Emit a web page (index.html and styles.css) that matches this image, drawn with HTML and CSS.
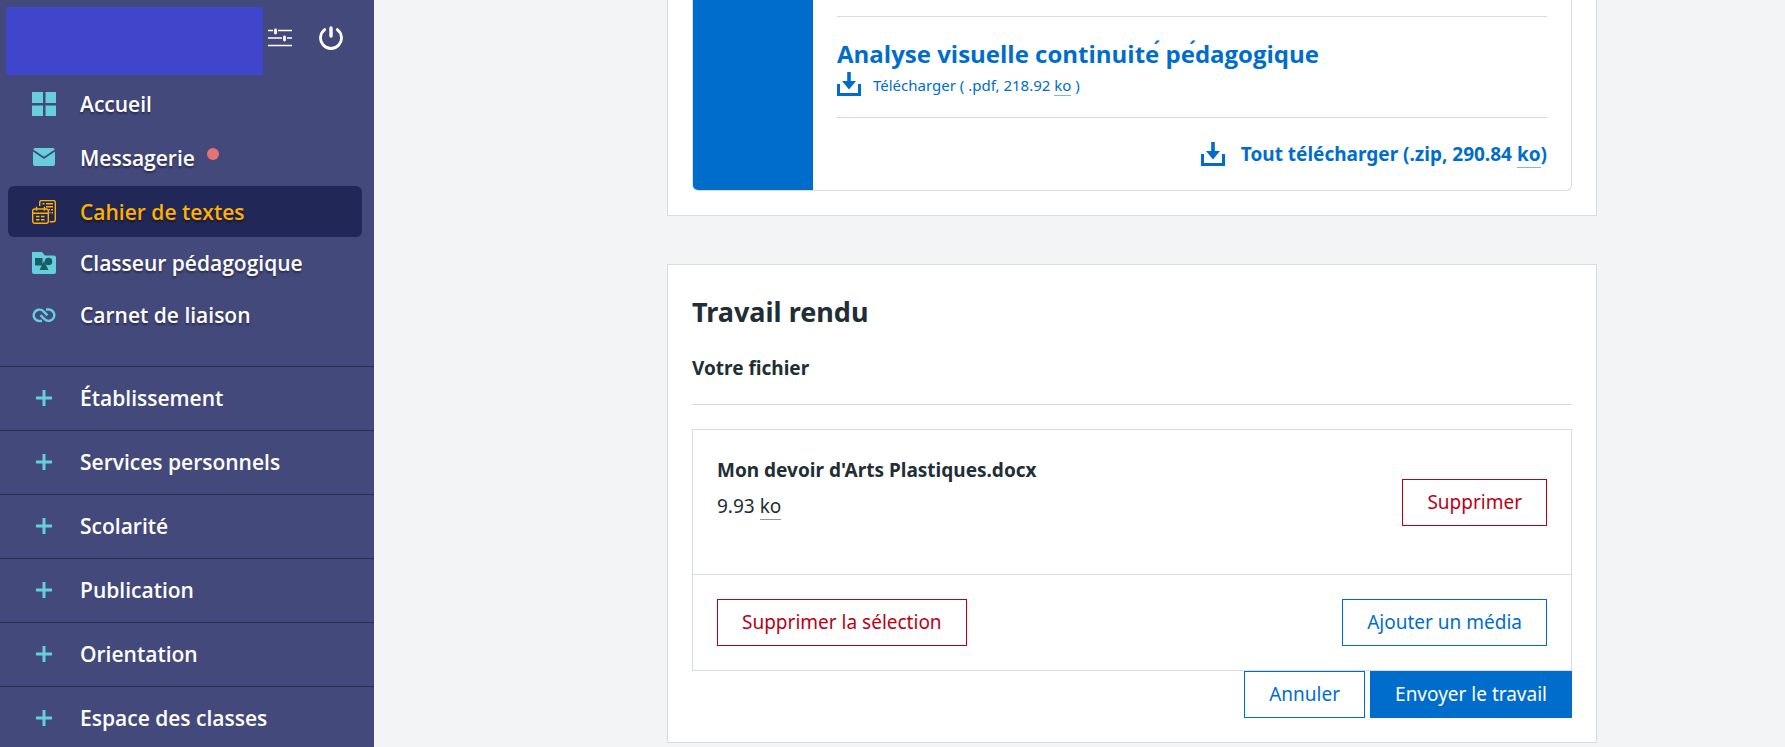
FILE: index.html
```html
<!DOCTYPE html>
<html lang="fr">
<head>
    <meta charset="UTF-8">
    <meta name="viewport" content="width=device-width, initial-scale=1.0">
    <title>Cahier de textes</title>
    <link rel="stylesheet" href="styles.css">
</head>
<body>
    <aside class="sidebar">
        <div class="sidebar-header">
            <div class="user"></div>
            <div class="header-actions">
                <button class="icon-button" type="button" aria-label="Préférences">
                    <svg class="icon" viewBox="0 0 24 24" fill="none" stroke="currentColor">
                        <path stroke-width="1.3" d="M0 4.500h5M10 4.500h14M0 12h14M19 12H24M0 19.500h24"/>
                        <path stroke-width="2.8" stroke-linecap="round" d="M7.5 4v3M16.5 11v3"/>
                    </svg>
                </button>
                <button class="icon-button" type="button" aria-label="Déconnexion">
                    <svg class="icon" viewBox="0 0 24 24" fill="none" stroke="currentColor" stroke-linecap="round">
                        <path stroke-width="2.8" d="M5.7 3.6a10.5 10.5 0 1 0 12.6 0"/>
                        <path stroke-width="3.4" d="M12 2v8"/>
                    </svg>
                </button>
            </div>
        </div>

        <nav>
            <ul class="menu">
                <li>
                    <a class="menu-link" href="#">
                        <svg class="icon" viewBox="0 0 24 24" fill="currentColor">
                            <path d="M0 0h11v11H0zM13.5 0H24v11H13.5zM0 13.5h11V24H0zM13.5 13.5H24V24H13.5z"/>
                        </svg>
                        <span>Accueil</span>
                    </a>
                </li>
                <li>
                    <a class="menu-link menu-link-mail" href="#">
                        <svg class="icon" viewBox="0 0 24 24" fill="currentColor">
                            <path d="M3 2h18a2 2 0 0 1 1.800 1.500L12 10.800 1.200 3.500A2 2 0 0 1 3 2z"/>
                            <path d="M1 5.600l11 7.400 11-7.400V18a2 2 0 0 1-2 2H3a2 2 0 0 1-2-2z"/>
                        </svg>
                        <span>Messagerie</span>
                        <span class="dot"></span>
                    </a>
                </li>
                <li>
                    <a class="menu-link active" href="#">
                        <svg class="icon" viewBox="0 0 24 24" fill="none" stroke="currentColor" stroke-width="1.4">
                            <path d="M7.700 6V2.500a2 2 0 0 1 2-2h11.600a2 2 0 0 1 2 2v17.200a2 2 0 0 1-2 2h-3.600"/>
                            <path d="M10.500 3.800h2M14 3.800h7M14 6.800h7M17 9.800h1M19 9.800h2M17.500 12.800h1M19.500 12.800h1.500"/>
                            <rect x=".7" y="9" width="15.600" height="14.300" rx="2"/>
                            <path d="M.7 13.200h15.600M4.500 6.800v4M12.500 6.800v4"/>
                            <path stroke-width="1.500" d="M4 16.600h3.500M9 16.600h3.500M4 19.800h3.500M9 19.800h3.500"/>
                        </svg>
                        <span>Cahier de textes</span>
                    </a>
                </li>
                <li>
                    <a class="menu-link" href="#">
                        <svg class="icon" viewBox="0 0 24 24">
                            <path fill="currentColor" d="M0 1h10l3 3.500h9a2 2 0 0 1 2 2V21a2 2 0 0 1-2 2H2a2 2 0 0 1-2-2z"/>
                            <g fill="#175f68">
                                <path d="M3 7h7.500v7.500H3zM12 10l4.500 9h-9z"/>
                                <circle cx="16.500" cy="10.500" r="3.800"/>
                            </g>
                        </svg>
                        <span>Classeur pédagogique</span>
                    </a>
                </li>
                <li>
                    <a class="menu-link" href="#">
                        <svg class="icon" viewBox="0 0 24 24" fill="none" stroke="currentColor" stroke-width="2.400">
                            <path d="M10 18H7.500a5.700 5.700 0 1 1 4-9.700l4 4"/>
                            <path d="M14 6.500h2.500a5.700 5.700 0 1 1-4 9.700l-4-4"/>
                        </svg>
                        <span>Carnet de liaison</span>
                    </a>
                </li>
            </ul>

            <ul class="groups">
                <li><button class="group-button" type="button"><svg class="icon" viewBox="0 0 24 24"><path d="M4 12h16M12 4v16"/></svg>Établissement</button></li>
                <li><button class="group-button" type="button"><svg class="icon" viewBox="0 0 24 24"><path d="M4 12h16M12 4v16"/></svg>Services personnels</button></li>
                <li><button class="group-button" type="button"><svg class="icon" viewBox="0 0 24 24"><path d="M4 12h16M12 4v16"/></svg>Scolarité</button></li>
                <li><button class="group-button" type="button"><svg class="icon" viewBox="0 0 24 24"><path d="M4 12h16M12 4v16"/></svg>Publication</button></li>
                <li><button class="group-button" type="button"><svg class="icon" viewBox="0 0 24 24"><path d="M4 12h16M12 4v16"/></svg>Orientation</button></li>
                <li><button class="group-button" type="button"><svg class="icon" viewBox="0 0 24 24"><path d="M4 12h16M12 4v16"/></svg>Espace des classes</button></li>
            </ul>
        </nav>
    </aside>

    <main class="content">
        <section class="card card-documents">
            <div class="documents">
                <div class="documents-side"></div>
                <div class="documents-list">
                    <a class="document" href="#">
                        <span class="document-title">Analyse visuelle continuite<span class="accent">&#x301;</span> pe<span class="accent">&#x301;</span>dagogique</span>
                        <span class="document-download">
                            <svg class="icon" viewBox="0 0 24 24" fill="currentColor">
                                <path d="M10.200 0h3.600v9H19l-7 8.500L5 9h5.200zM0 12h3v9h18v-9h3v12H0z"/>
                            </svg>
                            <span class="document-size">Télécharger ( .pdf, 218.92 <abbr>ko</abbr> )</span>
                        </span>
                    </a>
                    <a class="download-all" href="#">
                        <svg class="icon" viewBox="0 0 24 24" fill="currentColor">
                            <path d="M10.200 0h3.600v9H19l-7 8.500L5 9h5.200zM0 12h3v9h18v-9h3v12H0z"/>
                        </svg>
                        <span>Tout télécharger (.zip, 290.84 <abbr>ko</abbr>)</span>
                    </a>
                </div>
            </div>
        </section>

        <section class="card">
            <h2>Travail rendu</h2>
            <h3>Votre fichier</h3>
            <div class="files">
                <div class="file">
                    <div class="file-info">
                        <strong>Mon devoir d'Arts Plastiques.docx</strong>
                        <span>9.93 <abbr>ko</abbr></span>
                    </div>
                    <button class="btn btn-danger" type="button">Supprimer</button>
                </div>
                <div class="files-actions">
                    <button class="btn btn-danger" type="button">Supprimer la sélection</button>
                    <button class="btn" type="button">Ajouter un média</button>
                </div>
            </div>
            <div class="form-actions">
                <button class="btn" type="button">Annuler</button>
                <button class="btn btn-primary" type="submit">Envoyer le travail</button>
            </div>
        </section>
    </main>
</body>
</html>
```

FILE: styles.css
```css
* {
    box-sizing: border-box;
}

body {
    display: flex;
    height: 100vh;
    margin: 0;
    overflow: hidden;
    background-color: #f3f4f6;
    color: #222e35;
    font-family: "Noto Sans", "Open Sans", sans-serif;
    font-size: 19px;
}

ul {
    list-style: none;
    margin: 0;
    padding: 0;
}

a {
    color: inherit;
    text-decoration: none;
}

button {
    font: inherit;
    cursor: pointer;
}

abbr {
    border-bottom: 1px solid rgba(0, 109, 204, 0.5);
}

.icon {
    display: block;
    flex: none;
    width: 24px;
    height: 24px;
}

/* Sidebar */
.sidebar {
    flex: none;
    width: 374px;
    overflow: hidden;
    background-color: #44497c;
    color: #fff;
    font-family: "Open Sans", "Noto Sans", sans-serif;
    font-size: 21px;
    font-weight: 600;
}

.sidebar-header {
    display: flex;
    gap: 5px;
    padding: 7px 31px 3px 6px;
}

.user {
    flex: 1;
    height: 68px;
    background-color: #3f46cb;
}

.header-actions {
    display: flex;
    align-items: center;
    gap: 27px;
    padding-bottom: 6px;
}

.icon-button {
    padding: 0;
    border: 0;
    background: none;
    color: #fff;
}

.menu {
    margin: 0 12px 25px 8px;
}

.menu-link {
    display: flex;
    align-items: center;
    gap: 24px;
    height: 52px;
    padding: 0 24px;
    border-radius: 6px;
    text-shadow: 0 2px 2px rgba(0, 0, 0, 0.4);
}

.menu-link .icon {
    color: #67cfdc;
}

.menu-link-mail {
    height: 56px;
}

.active,
.menu-link.active .icon {
    color: #ffb000;
}

.active {
    height: 51px;
    background-color: #212756;
}

.dot {
    width: 12px;
    height: 12px;
    margin: 0 0 8px -12px;
    border-radius: 50%;
    background-color: #e67373;
}

.group-button {
    display: flex;
    align-items: center;
    gap: 24px;
    width: 100%;
    height: 64px;
    padding: 0 32px 2px;
    border: 0;
    border-top: 1px solid #2a2f52;
    background: none;
    color: #fff;
}

.group-button .icon {
    stroke: #67cfdc;
    stroke-width: 3;
}

/* Content */
.content {
    flex: 1;
    display: grid;
    grid-template-columns: 293fr minmax(0, 930px) 188fr;
    align-content: start;
    row-gap: 48px;
}

.card {
    grid-column: 2;
    padding: 24px;
    border: 1px solid #d5dde0;
    background-color: #fff;
}

.card-documents {
    padding-top: 0;
    border-top: 0;
}

.documents {
    display: flex;
    overflow: hidden;
    border: 1px solid #d5dde0;
    border-top: 0;
    border-radius: 0 0 6px 6px;
    color: #006dcc;
}

.documents-side {
    width: 120px;
    background-color: #006dcc;
}

.documents-list {
    flex: 1;
    padding: 16px 24px 24px;
}

.document {
    display: block;
    padding: 20px 0 19px;
    border-top: 1px solid #d5dde0;
    border-bottom: 1px solid #d5dde0;
}

.document-title {
    display: block;
    font-family: "Open Sans", "Noto Sans", sans-serif;
    font-size: 24px;
    font-weight: 700;
    line-height: 33px;
}

/* detached accents, drawn to the right of the letter */
.accent {
    font-family: "Liberation Sans", sans-serif;
    line-height: 0;
}

.document-download {
    display: flex;
    align-items: center;
    gap: 12px;
    font-size: 15px;
    line-height: 26px;
}

.document-size {
    padding-top: 2px;
}

.download-all {
    display: flex;
    align-items: center;
    justify-content: flex-end;
    gap: 16px;
    padding-top: 24px;
    font-weight: 700;
    line-height: 24px;
}

h2 {
    margin: 0 0 20px;
    font-size: 27px;
    line-height: 46px;
}

h3 {
    margin: 0 0 24px;
    padding-bottom: 22px;
    border-bottom: 1px solid #d5dde0;
    font-size: 19px;
    line-height: 27px;
}

.files {
    border: 1px solid #d5dde0;
}

.file,
.files-actions {
    display: flex;
    align-items: center;
    justify-content: space-between;
    padding: 24px;
}

.file {
    border-bottom: 1px solid #d5dde0;
}

.file-info {
    display: flex;
    flex-direction: column;
    gap: 4px;
    padding-bottom: 28px;
    line-height: 32px;
}

.file-info abbr {
    border-color: #90979a;
}

.btn {
    padding: 9px 24px;
    border: 1px solid #006dcc;
    background-color: #fff;
    color: #006dcc;
    line-height: 27px;
}

.btn-danger {
    border-color: #bb0014;
    color: #bb0014;
}

.btn-primary {
    background-color: #006dcc;
    color: #fff;
}

.form-actions {
    display: flex;
    justify-content: flex-end;
    gap: 5px;
}
```
